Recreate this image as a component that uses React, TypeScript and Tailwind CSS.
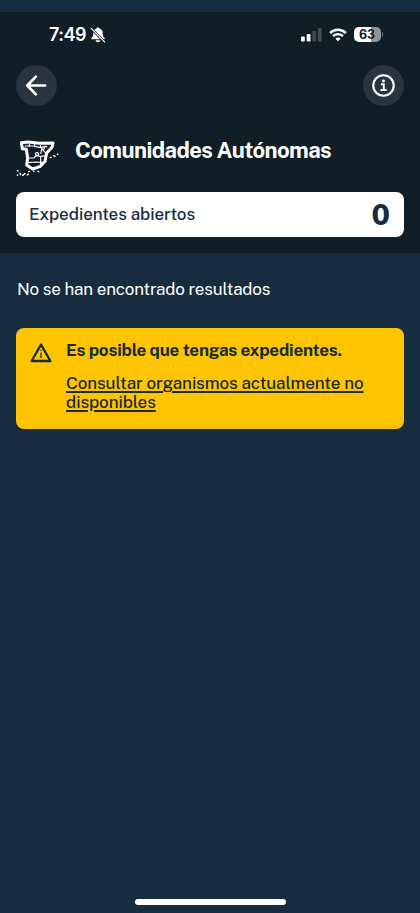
import { FunctionComponent } from "react";

type IconProps = {
  className?: string;
};

const BellOffIcon: FunctionComponent<IconProps> = ({ className = "" }) => (
  <svg className={className} viewBox="0 0 16 16" fill="none">
    <path
      d="M8 .5c.9 0 1.400.5 1.500 1.100 2 .6 3.200 2.200 3.200 4.300 0 3 .6 3.800 1.700 4.800.6.6.300 1.600-.5 1.600H2.100c-.8 0-1.100-1-.5-1.600 1.100-1 1.700-1.800 1.700-4.800 0-2.100 1.200-3.700 3.200-4.300C6.600 1 7.100.5 8 .5ZM5.600 13.200h4.800c-.2 1.200-1.100 2-2.400 2s-2.200-.8-2.400-2Z"
      fill="#fff"
    />
    <path d="M1.200 1.600 14.400 14.800" stroke="#101e28" strokeWidth="2.600" />
    <path
      d="M1.200 1.400 14.600 14.800"
      stroke="#fff"
      strokeWidth="1.200"
      strokeLinecap="round"
    />
  </svg>
);

const SignalIcon: FunctionComponent<IconProps> = ({ className = "" }) => (
  <svg className={className} viewBox="0 0 21 14">
    <rect x="0" y="8.500" width="3.800" height="5" rx="1.100" fill="#fff" />
    <rect x="5.700" y="6" width="3.800" height="7.500" rx="1.100" fill="#fff" />
    <rect x="11.300" y="3" width="3.800" height="10.500" rx="1.100" fill="#414c55" />
    <rect x="16.900" y="0" width="3.800" height="13.500" rx="1.100" fill="#414c55" />
  </svg>
);

const WifiIcon: FunctionComponent<IconProps> = ({ className = "" }) => (
  <svg className={className} viewBox="0 0 18 14" fill="none" stroke="#fff">
    <path d="M1.100 5a11.200 11.200 0 0 1 15.800 0" strokeWidth="2.500" />
    <path d="M4 8.200a7.100 7.100 0 0 1 10 0" strokeWidth="2.400" />
    <path
      d="M9 13.300 6.400 10.800a3.800 3.800 0 0 1 5.200 0Z"
      fill="#fff"
      stroke="none"
    />
  </svg>
);

const ArrowLeftIcon: FunctionComponent<IconProps> = ({ className = "" }) => (
  <svg
    className={className}
    viewBox="0 0 24 24"
    fill="none"
    stroke="#fff"
    strokeWidth="2.800"
    strokeLinecap="round"
    strokeLinejoin="round"
  >
    <path d="M21 12H2.600M11.300 2.800 2.400 12l8.900 9.200" />
  </svg>
);

const InfoIcon: FunctionComponent<IconProps> = ({ className = "" }) => (
  <svg className={className} viewBox="0 0 24 24" fill="none" stroke="#fff">
    <circle cx="12" cy="12" r="10.700" strokeWidth="2.200" />
    <path d="M9.300 10.700h3v5.800M8.800 16.700h6.600" strokeWidth="2" />
    <circle cx="12" cy="7.300" r="1.500" fill="#fff" stroke="none" />
  </svg>
);

const SpainMapIcon: FunctionComponent<IconProps> = ({ className = "" }) => (
  <svg className={className} viewBox="0 0 156 144" fill="none" stroke="#fff">
    <path
      d="M34 26 54 24 88 28 129 27 126 40 110 57 105 82 91 97 68 105 50 93 53 72 49 46 37 44Z"
      strokeWidth="9"
      strokeLinejoin="round"
    />
    <path
      d="M44 36h26l18 4 24-2M54 72h18l8-9 10 5 16-3M54 86l22-2 27 2M92 66v28M96 40l-4 20"
      strokeWidth="3.500"
    />
    <path d="M58 30v9M74 30v10M90 34l8 14M106 34l-6 16 6 6" strokeWidth="3.500" />
    <circle cx="81" cy="61" r="5" strokeWidth="3.500" />
    <path
      d="M121 71l2-1M131 65l4 2M142 61h1M22 110l2 1M22 123l1 1M30 118l2 4M38 124l3-2M43 120l2-1M52 122l3-1M56 113l2-1M71 112h1M84 112l2 1"
      strokeWidth="4.500"
      strokeLinecap="round"
    />
  </svg>
);

const WarningIcon: FunctionComponent<IconProps> = ({ className = "" }) => (
  <svg className={className} viewBox="0 0 22 20" fill="none" stroke="#172c40">
    <path d="M11 1.600 20.400 18H1.600Z" strokeWidth="2.300" strokeLinejoin="round" />
    <path d="M11 9.500v5.500M11 6.700v1.400" strokeWidth="1.200" />
  </svg>
);

const StatusBar: FunctionComponent = () => (
  <div className="flex h-11 items-center justify-between pl-[49px] pr-[37px] pt-px font-['Inter',sans-serif]">
    <div className="flex items-center gap-1">
      <span className="w-[37px] whitespace-nowrap text-[18px] font-semibold leading-none tracking-[-0.500px]">
        7:49
      </span>
      <BellOffIcon className="size-4" />
    </div>
    <div className="flex items-center">
      <SignalIcon className="h-3.5 w-[21px]" />
      <WifiIcon className="ml-[7px] h-3.5 w-[18px]" />
      <div className="ml-[7px] flex h-[15px] w-[27px] items-center justify-center rounded-[5px] bg-linear-to-r from-white from-63% to-[#90979c] to-63% pt-px text-[12.500px] font-bold leading-none text-[#101e28]">
        63
      </div>
      <div className="ml-px h-[5px] w-[1.500px] rounded-r-full bg-[#6d767d]" />
    </div>
  </div>
);

const App: FunctionComponent = () => {
  return (
    <div className="flex h-[913px] w-full flex-col bg-[#182c40] font-['Public_Sans','Inter',sans-serif] text-white">
      <header className="mt-[12px] flex h-[241px] flex-col bg-[#101e28]">
        <StatusBar />
        <div className="mt-[9px] flex h-[42px] justify-between px-4">
          <button
            type="button"
            aria-label="Volver"
            className="flex size-[41px] items-center justify-center rounded-full bg-[#28343f]"
          >
            <ArrowLeftIcon className="size-[23px]" />
          </button>
          <button
            type="button"
            aria-label="Información"
            className="flex size-[41px] items-center justify-center rounded-full bg-[#28343f]"
          >
            <InfoIcon className="size-[23px]" />
          </button>
        </div>
        <div className="mt-[27px] flex h-12 pl-[10px]">
          <SpainMapIcon className="h-12 w-[52px] shrink-0" />
          <h1 className="ml-[13px] mt-[3px] whitespace-nowrap text-[22px] font-bold leading-[26px] tracking-[-0.580px]">
            Comunidades Autónomas
          </h1>
        </div>
        <div className="mx-4 mt-[10px] flex h-[45px] items-center justify-between rounded-lg bg-white pl-[13px] pr-[14px] text-[#172c40]">
          <span className="text-[17px] font-medium tracking-[-0.080px]">
            Expedientes abiertos
          </span>
          <span className="text-[28px] font-extrabold leading-none">0</span>
        </div>
      </header>

      <main className="flex flex-1 flex-col px-4">
        <p className="ml-px mt-6 text-[17px] leading-6 tracking-[-0.180px]">
          No se han encontrado resultados
        </p>
        <section className="mt-[27px] flex h-[101px] rounded-lg bg-[#ffc400] pl-[14px] text-[#172c40]">
          <WarningIcon className="mt-[15px] h-5 w-[22px] shrink-0" />
          <div className="ml-[14px] mt-[12px] text-[17px]">
            <p className="whitespace-nowrap font-bold leading-5 tracking-[-0.210px]">
              Es posible que tengas expedientes.
            </p>
            <a
              href="#"
              className="mt-[14px] block whitespace-nowrap font-medium leading-[19px] tracking-[-0.090px] underline decoration-[1.500px] underline-offset-2"
            >
              Consultar organismos actualmente no
              <br />
              disponibles
            </a>
          </div>
        </section>
      </main>

      <div className="mb-[8px] h-[6px] w-[151px] self-center rounded-full bg-white" />
    </div>
  );
};

export default App;
